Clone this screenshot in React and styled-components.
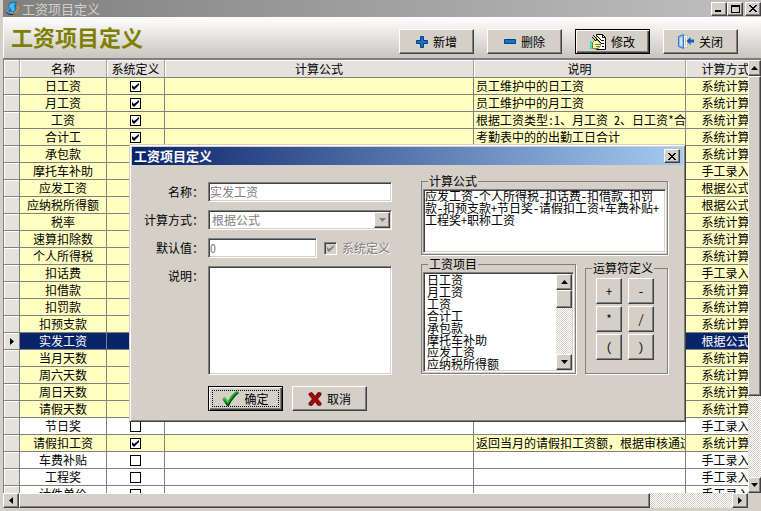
import React, { useState } from "react";
import styled, { createGlobalStyle, css } from "styled-components";

const GlobalStyle = createGlobalStyle`
  * {
    box-sizing: border-box;
  }
  body {
    margin: 0;
    overflow: hidden;
    background: #d4d0c8;
  }
  body, button, input, select, textarea {
    font-family: "Noto Sans CJK SC", sans-serif;
    font-feature-settings: "hwid";
    font-size: 12px;
    line-height: 16px;
    color: #000;
  }
`;

const raised = css`
  border: 1px solid;
  border-color: #fff #404040 #404040 #fff;
  box-shadow: inset -1px -1px 0 #808080;
  background: #d4d0c8;
`;

const sunken = css`
  border: 1px solid;
  border-color: #808080 #fff #fff #808080;
  box-shadow: inset 1px 1px 0 #404040, inset -1px -1px 0 #d4d0c8;
  background: #fff;
`;

const Window = styled.div`
  position: relative;
  display: flex;
  flex-direction: column;
  height: 100vh;
  overflow: hidden;
  padding: 0 0 3px 3px;
  background: #d4d0c8;
`;

const TitleBar = styled.header`
  display: flex;
  flex: none;
  align-items: center;
  gap: 2px;
  height: 17px;
  padding-left: 2px;
  color: #d4d0c8;
  background: linear-gradient(90deg, #808080, #c0c0c0);
`;

const WindowTitle = styled.span`
  flex: 1;
  font-size: 13px;
`;

const CaptionButton = styled.button`
  ${raised}
  display: flex;
  flex: none;
  align-items: center;
  justify-content: center;
  width: 16px;
  height: 14px;
  padding: 0;
`;

const CaptionGroup = styled.div`
  display: flex;
  flex: none;
  gap: ${({ $gap }) => $gap || 0}px;
`;

const Banner = styled.div`
  display: flex;
  flex: none;
  justify-content: space-between;
  height: 41px;
  padding: 0 23px 0 7px;
  border-left: 1px solid #fff;
  background: linear-gradient(#fff, #c9c5be);
`;

const Heading = styled.h1`
  margin: 0;
  padding-top: 3px;
  font-size: 22px;
  line-height: 32px;
  font-weight: bold;
  color: #808000;
`;

const Toolbar = styled.div`
  display: flex;
  gap: 13px;
  padding-top: 12px;
`;

const PushButton = styled.button`
  ${raised}
  display: flex;
  align-items: center;
  justify-content: center;
  gap: 5px;
  width: 75px;
  height: 25px;
  padding: 0;
  ${({ $isDefault }) =>
    $isDefault &&
    css`
      border-color: #000;
      box-shadow: inset 1px 1px 0 #fff, inset -1px -1px 0 #404040,
        inset -2px -2px 0 #808080;
    `}
  ${({ $focused }) =>
    $focused &&
    css`
      outline: 1px dotted #000;
      outline-offset: -5px;
    `}
`;

const GridArea = styled.div`
  display: flex;
  flex: 1;
  min-height: 0;
  border-top: 2px solid #808080;
`;

const GridView = styled.div`
  flex: 1;
  min-width: 0;
  overflow: hidden;
  border-left: 1px solid #808080;
  background: #fff;
`;

const Grid = styled.table`
  width: calc(100% + 18px);
  table-layout: fixed;
  border-collapse: separate;
  border-spacing: 0;
`;

const Col = styled.col`
  width: ${({ $w }) => ($w ? `${$w}px` : "auto")};
`;

const HeadCell = styled.th`
  height: 18px;
  padding: 0;
  overflow: hidden;
  font-weight: normal;
  white-space: nowrap;
  background: #e4e2dd;
  border-right: 1px solid #a8a49c;
  border-bottom: 1px solid #808080;
  box-shadow: inset 1px 1px 0 #fff;
`;

const Row = styled.tr`
  color: ${({ $selected }) => ($selected ? "#fff" : "#000")};
  background: ${({ $selected, $system }) =>
    $selected ? "#0a246a" : $system ? "#ffffc1" : "#fff"};
`;

const Cell = styled.td`
  height: 17px;
  padding: 0 ${({ $left }) => ($left ? 2 : 0)}px;
  overflow: hidden;
  line-height: 16px;
  white-space: nowrap;
  text-align: ${({ $left }) => ($left ? "left" : "center")};
  font-feature-settings: ${({ $fullWidth }) => ($fullWidth ? "normal" : "inherit")};
  border-right: 1px solid #808080;
  border-bottom: 1px solid #808080;
`;

const Gutter = styled(Cell)`
  background: #e4e2dd;
  box-shadow: inset 1px 1px 0 #fff;

  svg {
    display: block;
    margin: 0 auto;
  }
`;

const Tick = styled.input`
  appearance: none;
  display: block;
  width: ${({ $size }) => $size || 11}px;
  height: ${({ $size }) => $size || 11}px;
  margin: 0 auto;
  border: 1px solid #000;
  background: #fff;

  &:checked {
    background: #fff
      url("data:image/svg+xml,%3Csvg xmlns='http://www.w3.org/2000/svg' viewBox='0 0 9 9'%3E%3Cpath d='M1 3v3l2 2 5-5V1L3 5z' fill='%23000'/%3E%3C/svg%3E");
  }
  &:disabled {
    ${sunken}
    margin: 0;
    background: #d4d0c8
      url("data:image/svg+xml,%3Csvg xmlns='http://www.w3.org/2000/svg' viewBox='0 0 11 11'%3E%3Cpath d='M2 4v3l2 2 5-5V2L4 6z' fill='%23808080'/%3E%3C/svg%3E");
  }
`;

const track = css`
  background: repeating-conic-gradient(#fff 0 25%, #d4d0c8 0 50%) 0 0 / 2px 2px;
`;

const VScroll = styled.div`
  ${track}
  display: flex;
  flex: none;
  flex-direction: column;
  width: ${({ $w }) => $w}px;
`;

const HScroll = styled.div`
  ${track}
  display: flex;
  flex: 1;
  height: 15px;
`;

const BottomBar = styled.div`
  display: flex;
  flex: none;
  padding-right: 13px;
`;

const ScrollButton = styled.button`
  ${raised}
  display: flex;
  flex: none;
  align-items: center;
  justify-content: center;
  width: 16px;
  height: 16px;
  padding: 0;
`;

const VArrow = styled(ScrollButton)`
  width: 100%;
`;

const HArrow = styled(ScrollButton)`
  height: 100%;
`;

const Thumb = styled.div`
  ${raised}
  flex: ${({ $flex }) => $flex || "none"};
  height: ${({ $h }) => ($h ? `${$h}px` : "auto")};
`;

const Space = styled.div`
  flex: ${({ $flex }) => $flex || 1};
`;

const Dialog = styled.section`
  position: absolute;
  left: 129px;
  top: 144px;
  width: 557px;
  padding: 2px;
  border: 1px solid;
  border-color: #d4d0c8 #404040 #404040 #d4d0c8;
  box-shadow: inset 1px 1px 0 #fff, inset -1px -1px 0 #808080;
  background: #d4d0c8;
`;

const DialogTitle = styled.header`
  display: flex;
  align-items: center;
  justify-content: space-between;
  height: 18px;
  padding: 0 3px 0 2px;
  color: #fff;
  font-size: 13px;
  font-weight: bold;
  background: linear-gradient(90deg, #0a246a, #a6caf0);
`;

const DialogBody = styled.form`
  display: grid;
  grid-template-columns: 260px 247px;
  column-gap: 29px;
  padding: 8px 15px 7px 0;
`;

const Fields = styled.div`
  display: grid;
  grid-template-columns: 72px 184px;
  grid-template-rows: 20px 20px 20px 110px 28px;
  gap: 8px 4px;
  padding-top: 9px;
`;

const Label = styled.label`
  padding-top: 2px;
  text-align: right;
  white-space: nowrap;
`;

const TextField = styled.input`
  ${sunken}
  width: ${({ $w }) => ($w ? `${$w}px` : "100%")};
  height: 20px;
  padding: 0 1px 2px;

  &:disabled {
    color: #808080;
  }
`;

const Inline = styled.div`
  display: flex;
  align-items: center;
  gap: 7px;
`;

const DisabledLabel = styled.label`
  display: flex;
  align-items: center;
  gap: 5px;
  white-space: nowrap;
  color: #808080;
  text-shadow: 1px 1px 0 #fff;
`;

const Combo = styled.div`
  ${sunken}
  display: flex;
  align-items: center;
  height: 20px;
  padding: 1px;
`;

const ComboSelect = styled.select`
  appearance: none;
  flex: 1;
  height: 16px;
  padding: 0 2px;
  border: 0;
  background: none;

  &:disabled {
    color: #808080;
    opacity: 1;
  }
`;

const Memo = styled.textarea`
  ${sunken}
  display: block;
  width: 100%;
  height: ${({ $h }) => $h}px;
  padding: 0 1px;
  resize: none;
  overflow: hidden;
  line-height: 12px;
  white-space: pre;
`;

const Buttons = styled.div`
  display: flex;
  grid-column: 2;
  gap: 9px;
  padding-top: 2px;
`;

const Groups = styled.div`
  display: grid;
  grid-template-columns: 155px 83px;
  grid-template-rows: 82px 118px;
  gap: 1px 9px;
  align-items: end;
`;

const Group = styled.fieldset`
  min-width: 0;
  height: ${({ $h }) => $h}px;
  margin: 0;
  padding: 0 1px 1px;
  border: 1px solid #808080;
  box-shadow: 1px 1px 0 #fff, inset 0 0 0 0 #fff;
  grid-column: ${({ $wide }) => ($wide ? "1 / 3" : "auto")};
`;

const Legend = styled.legend`
  margin-left: 5px;
  padding: 0 1px;
  line-height: 16px;
`;

const ListFrame = styled.div`
  ${sunken}
  display: flex;
  height: 100px;
  padding: 1px;
`;

const ListBox = styled.ul`
  flex: 1;
  min-width: 0;
  height: 96px;
  margin: 0;
  padding: 0 2px;
  overflow: hidden;
  list-style: none;
  line-height: 12px;
  outline: 0;
`;

const Keys = styled.div`
  display: grid;
  grid-template-columns: 26px 26px;
  gap: 2px 6px;
  padding: 2px 0 0 9px;
`;

const Key = styled.button`
  ${raised}
  height: 26px;
  padding: 0;
`;

const ROWS = [
  ["日工资", true, "系统计算", "员工维护中的日工资"],
  ["月工资", true, "系统计算", "员工维护中的月工资"],
  ["工资", true, "系统计算", "根据工资类型:1、月工资 2、日工资*合"],
  ["合计工", true, "系统计算", "考勤表中的的出勤工日合计"],
  ["承包款", true, "系统计算"],
  ["摩托车补助", true, "手工录入"],
  ["应发工资", true, "根据公式"],
  ["应纳税所得额", true, "根据公式"],
  ["税率", true, "系统计算"],
  ["速算扣除数", true, "系统计算"],
  ["个人所得税", true, "系统计算"],
  ["扣话费", true, "手工录入"],
  ["扣借款", true, "系统计算"],
  ["扣罚款", true, "系统计算"],
  ["扣预支款", true, "系统计算"],
  ["实发工资", true, "根据公式"],
  ["当月天数", true, "系统计算"],
  ["周六天数", true, "系统计算"],
  ["周日天数", true, "系统计算"],
  ["请假天数", true, "系统计算"],
  ["节日奖", false, "手工录入"],
  ["请假扣工资", true, "系统计算", "返回当月的请假扣工资额，根据审核通过"],
  ["车费补贴", false, "手工录入"],
  ["工程奖", false, "手工录入"],
  ["计件单价", false, "手工录入"],
];

const FORMULA =
  "应发工资-个人所得税-扣话费-扣借款-扣罚\n款-扣预支款+节日奖-请假扣工资+车费补贴+\n工程奖+职称工资";

const ARROWS = {
  up: "M0 4h7L3.5 0z",
  down: "M0 0h7L3.5 4z",
  left: "M4 0v7L0 3.5z",
  right: "M0 0v7l4-3.5z",
};

const Arrow = ({ dir, color = "#000" }) => {
  const isVertical = dir === "up" || dir === "down";
  return (
    <svg width={isVertical ? 7 : 4} height={isVertical ? 4 : 7} aria-hidden="true">
      <path d={ARROWS[dir]} fill={color} />
    </svg>
  );
};

const CloseGlyph = () => (
  <svg width="8" height="7" aria-hidden="true" shapeRendering="crispEdges">
    <path
      d="M0 0h2v1h1v1h2V1h1V0h2v1H7v1H6v1H5v1h1v1h1v1h1v1H6V6H5V5H3v1H2v1H0V6h1V5h1V4h1V3H2V2H1V1H0z"
      fill="#000"
    />
  </svg>
);

const LogoIcon = () => (
  <svg width="15" height="15" viewBox="0 0 15 15" aria-hidden="true">
    <path d="M3 4c1-3 5-4 9-3l-1 3 1 5-3 4-7-2 3-2z" fill="#1673b4" />
    <path d="M4 4c2-2 4-2 6-2L9 5l1 4-3 2c0-3-3-4-3-7z" fill="#43bdf0" />
    <path d="M0 9c2 3 6 4 10 2l-2 3C4 14 1 13 0 9z" fill="#082f70" />
    <path d="M3 12c4 1 8-1 9-5l-1-1 3-1c1 5-5 10-11 7z" fill="#e0862c" />
    <path d="M1 10c2 2 5 2 7 1" fill="none" stroke="#55d3f4" />
  </svg>
);

const PlusIcon = () => (
  <svg width="12" height="12" aria-hidden="true">
    <path d="M4.5.5h3v4h4v3h-4v4h-3v-4h-4v-3h4z" fill="#1473c8" stroke="#083f8c" />
  </svg>
);

const MinusIcon = () => (
  <svg width="12" height="5" aria-hidden="true">
    <path d="M.5.5h11v4H.5z" fill="#1473c8" stroke="#083f8c" />
  </svg>
);

const EditIcon = () => (
  <svg width="16" height="16" viewBox="0 0 16 16" aria-hidden="true">
    <path d="M6.500.5h6l3 3v12h-9z" fill="#fff" stroke="#000" />
    <path d="M12.500.5v3h3M12 6.500h2M12 9.500h2M9 12.500h1m2 0h2" fill="none" stroke="#000" />
    <path d="M0 7h2v8H0z" fill="#3fe0c0" />
    <path d="M2.500 8.500l2-2h3l3 3v2l-2 3h-6z" fill="#ffffb0" stroke="#77773a" />
    <path d="M5 10.500h5M6 12.500h3" stroke="#77773a" />
    <path d="M3 1l9 9M6 1l6 6" fill="none" stroke="#000" />
    <path d="M4.500 1l7.500 7.500" stroke="#ffff90" />
    <path d="M2 3l4 4" stroke="#000" />
  </svg>
);

const ExitIcon = () => (
  <svg width="16" height="16" viewBox="0 0 16 16" aria-hidden="true">
    <path d="M3.500 1.500h6v12h-6z" fill="#fffbe8" stroke="#a9c6e8" />
    <path d="M.5 2.500l5-2v14l-5-2z" fill="#8dbcf0" stroke="#3b76bd" />
    <path d="M2 4l2-1v9l-2-1z" fill="#c8e2ff" />
    <path d="M7 3h1v9H7z" fill="#d8b860" />
    <path d="M8.500 7l4-4v2.500H16v3h-3.500V11z" fill="#1160b8" />
  </svg>
);

const CheckIcon = () => (
  <svg width="17" height="15" viewBox="0 0 17 15" aria-hidden="true">
    <path d="M1 9l2-1 3 3C8 7 11 3 16 1l1 1c-4 3-7 7-10 13H5z" fill="#0a4a2a" />
    <path d="M0 8l3-2 3 4C8 6 11 2 15 0l1 1c-4 3-7 7-10 12z" fill="#1eae1e" />
    <path d="M1.500 8l1.500-1 3 4" fill="none" stroke="#56dc48" />
  </svg>
);

const CrossIcon = () => (
  <svg width="14" height="14" viewBox="0 0 14 14" aria-hidden="true">
    <path
      d="M1 1.500l3-1 3 4 3-4 3 .500v2L9.500 7l3.500 4v2l-3 .500-3-4-3 4-3-.500v-2L4.500 7 1 3z"
      fill="#9c0c0c"
      stroke="#7c0808"
      strokeLinejoin="round"
    />
  </svg>
);

const PayrollGrid = ({ selected }) => (
  <GridView>
    <Grid>
      <colgroup>
        <Col $w={16} />
        <Col $w={87} />
        <Col $w={58} />
        <Col />
        <Col $w={212} />
        <Col $w={80} />
      </colgroup>
      <thead>
        <tr>
          <HeadCell />
          <HeadCell>名称</HeadCell>
          <HeadCell>系统定义</HeadCell>
          <HeadCell>计算公式</HeadCell>
          <HeadCell>说明</HeadCell>
          <HeadCell>计算方式</HeadCell>
        </tr>
      </thead>
      <tbody>
        {ROWS.map(([name, system, method, note]) => (
          <Row key={name} $system={system} $selected={name === selected}>
            <Gutter>{name === selected && <Arrow dir="right" />}</Gutter>
            <Cell>{name}</Cell>
            <Cell>
              <Tick type="checkbox" aria-label={name} checked={system} readOnly />
            </Cell>
            <Cell />
            <Cell $left $fullWidth={note?.includes("，")}>
              {note}
            </Cell>
            <Cell>{method}</Cell>
          </Row>
        ))}
      </tbody>
    </Grid>
  </GridView>
);

const ItemDialog = ({ onClose }) => {
  const [formula, setFormula] = useState(FORMULA);
  const [note, setNote] = useState("");

  return (
    <Dialog role="dialog" aria-labelledby="dialog-title">
      <DialogTitle>
        <span id="dialog-title">工资项目定义</span>
        <CaptionButton aria-label="关闭" onClick={onClose}>
          <CloseGlyph />
        </CaptionButton>
      </DialogTitle>
      <DialogBody onSubmit={(e) => e.preventDefault()}>
        <Fields>
          <Label htmlFor="name">名称：</Label>
          <TextField id="name" defaultValue="实发工资" disabled />
          <Label htmlFor="method">计算方式：</Label>
          <Combo>
            <ComboSelect id="method" disabled>
              <option>根据公式</option>
            </ComboSelect>
            <ScrollButton type="button" tabIndex={-1} aria-label="展开" disabled>
              <Arrow dir="down" color="#808080" />
            </ScrollButton>
          </Combo>
          <Label htmlFor="default">默认值：</Label>
          <Inline>
            <TextField id="default" $w={109} defaultValue="0" disabled />
            <DisabledLabel>
              <Tick type="checkbox" $size={13} defaultChecked disabled />
              系统定义
            </DisabledLabel>
          </Inline>
          <Label htmlFor="note">说明：</Label>
          <Memo id="note" $h={109} value={note} onChange={(e) => setNote(e.target.value)} />
          <Buttons>
            <PushButton type="submit" $isDefault $focused>
              <CheckIcon />
              确定
            </PushButton>
            <PushButton type="button" onClick={onClose}>
              <CrossIcon />
              取消
            </PushButton>
          </Buttons>
        </Fields>
        <Groups>
          <Group $wide $h={82}>
            <Legend>计算公式</Legend>
            <Memo
              $h={64}
              aria-label="计算公式"
              value={formula}
              onChange={(e) => setFormula(e.target.value)}
            />
          </Group>
          <Group $h={118}>
            <Legend>工资项目</Legend>
            <ListFrame>
              <ListBox role="listbox" aria-label="工资项目" tabIndex={0}>
                {ROWS.slice(0, 8).map(([name]) => (
                  <li key={name} role="option" aria-selected="false">
                    {name}
                  </li>
                ))}
              </ListBox>
              <VScroll $w={16}>
                <VArrow type="button" aria-label="向上">
                  <Arrow dir="up" />
                </VArrow>
                <Thumb $h={18} />
                <Space />
                <VArrow type="button" aria-label="向下">
                  <Arrow dir="down" />
                </VArrow>
              </VScroll>
            </ListFrame>
          </Group>
          <Group $h={114}>
            <Legend>运算符定义</Legend>
            <Keys>
              {["+", "-", "*", "/", "(", ")"].map((op) => (
                <Key key={op} type="button" onClick={() => setFormula(formula + op)}>
                  {op}
                </Key>
              ))}
            </Keys>
          </Group>
        </Groups>
      </DialogBody>
    </Dialog>
  );
};

const App = () => {
  const [isOpen, setIsOpen] = useState(true);

  return (
    <>
      <GlobalStyle />
      <Window>
        <TitleBar>
          <LogoIcon />
          <WindowTitle>工资项目定义</WindowTitle>
          <CaptionGroup $gap={2}>
            <CaptionGroup>
              <CaptionButton aria-label="最小化">
                <svg width="8" height="7" aria-hidden="true">
                  <path d="M0 5h6v2H0z" />
                </svg>
              </CaptionButton>
              <CaptionButton aria-label="最大化">
                <svg width="9" height="8" aria-hidden="true">
                  <path d="M0 0h9v8H0zM1 2v5h7V2z" fillRule="evenodd" />
                </svg>
              </CaptionButton>
            </CaptionGroup>
            <CaptionButton aria-label="关闭">
              <CloseGlyph />
            </CaptionButton>
          </CaptionGroup>
        </TitleBar>
        <Banner>
          <Heading>工资项目定义</Heading>
          <Toolbar>
            <PushButton>
              <PlusIcon />
              新增
            </PushButton>
            <PushButton>
              <MinusIcon />
              删除
            </PushButton>
            <PushButton $isDefault onClick={() => setIsOpen(true)}>
              <EditIcon />
              修改
            </PushButton>
            <PushButton>
              <ExitIcon />
              关闭
            </PushButton>
          </Toolbar>
        </Banner>
        <GridArea>
          <PayrollGrid selected="实发工资" />
          <VScroll $w={13}>
            <VArrow aria-label="向上">
              <Arrow dir="up" />
            </VArrow>
            <Thumb $flex={320} />
            <Space $flex={82} />
            <VArrow aria-label="向下">
              <Arrow dir="down" />
            </VArrow>
          </VScroll>
        </GridArea>
        <BottomBar>
          <HScroll>
            <HArrow aria-label="向左">
              <Arrow dir="left" />
            </HArrow>
            <Thumb $flex={631} />
            <Space $flex={82} />
            <HArrow aria-label="向右">
              <Arrow dir="right" />
            </HArrow>
          </HScroll>
        </BottomBar>
        {isOpen && <ItemDialog onClose={() => setIsOpen(false)} />}
      </Window>
    </>
  );
};

export default App;
